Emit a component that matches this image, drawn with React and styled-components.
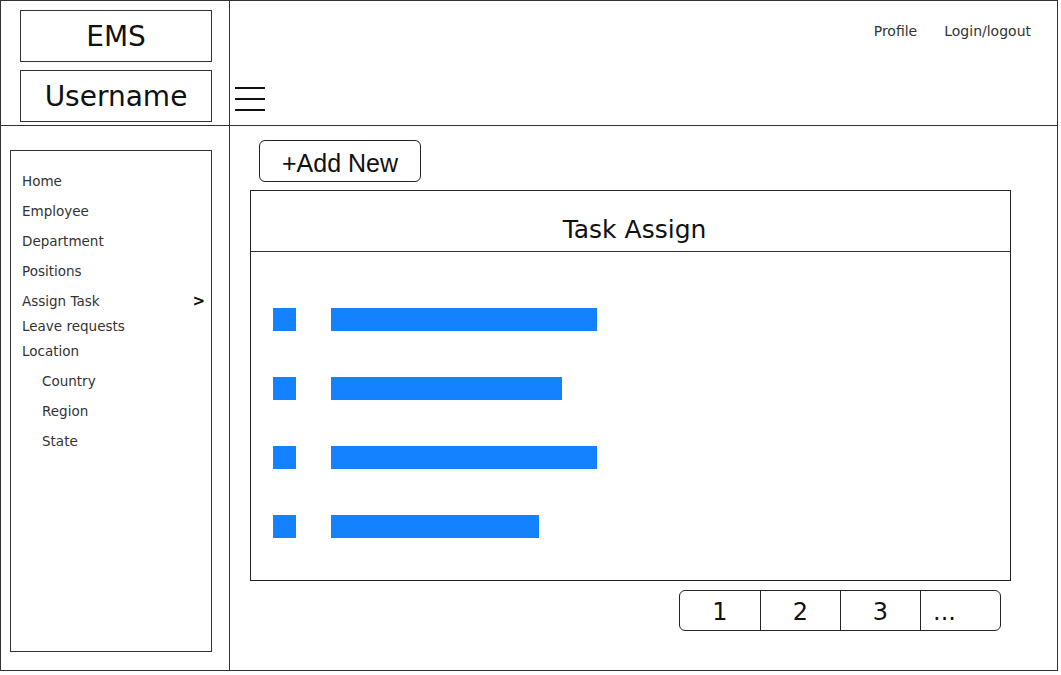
import styled, { createGlobalStyle } from 'styled-components';

const menu = [
  { label: "Home", h: 30 },
  { label: "Employee", h: 30 },
  { label: "Department", h: 30 },
  { label: "Positions", h: 30 },
  { label: "Assign Task", h: 30, arrow: true },
  { label: "Leave requests", h: 20 },
  { label: "Location", h: 30 },
  { label: "Country", h: 30, sub: true },
  { label: "Region", h: 30, sub: true },
  { label: "State", h: 30, sub: true }
];

const tasks = [266, 231, 266, 208];
const pages = ["1", "2", "3", "..."];

const GlobalStyle = createGlobalStyle`
  * { box-sizing: border-box; }
  body {
    margin: 0;
    background: white;
    font-family: "DejaVu Sans", sans-serif;
    color: #222;
  }
`;

const App = () => {
  return (
    <>
      <GlobalStyle />
      <Frame>
        <Brand>
          <BrandBox>EMS</BrandBox>
          <BrandBox>Username</BrandBox>
        </Brand>
        <Topbar>
          <TopLinks>
            <TopLink>Profile</TopLink>
            <TopLink>Login/logout</TopLink>
          </TopLinks>
          <Burger>
            <span />
            <span />
            <span />
          </Burger>
        </Topbar>
        <Sidebar>
          <MenuBox>
            {menu.map((item, i) => (
              <MenuItem key={i} $h={item.h} $sub={item.sub}>
                {item.label}
                {item.arrow && <Arrow>&gt;</Arrow>}
              </MenuItem>
            ))}
          </MenuBox>
        </Sidebar>
        <Main>
          <AddButton>+Add New</AddButton>
          <Panel>
            <PanelHeader>Task Assign</PanelHeader>
            <TaskList>
              {tasks.map((w, i) => (
                <TaskRow key={i}>
                  <Square />
                  <Bar style={{ width: w }} />
                </TaskRow>
              ))}
            </TaskList>
          </Panel>
          <Pager>
            {pages.map((p, i) => (
              <PageCell key={i} $dots={p === "..."}>{p}</PageCell>
            ))}
          </Pager>
        </Main>
      </Frame>
    </>
  );
};

const Frame = styled.div`
  width: 1058px;
  height: 671px;
  border: 1px solid #333;
  display: grid;
  grid-template-columns: 229px 1fr;
  grid-template-rows: 125px 1fr;
`;

const Brand = styled.div`
  border-right: 1px solid #333;
  border-bottom: 1px solid #333;
  display: flex;
  flex-direction: column;
  gap: 8px;
  padding: 9px 0 0 19px;
`;

const BrandBox = styled.div`
  width: 192px;
  height: 52px;
  border: 1.5px solid #333;
  display: flex;
  align-items: center;
  justify-content: center;
  font-size: 28px;
  color: #111;
`;

const Topbar = styled.div`
  border-bottom: 1px solid #333;
  display: flex;
  flex-direction: column;
  justify-content: space-between;
  padding: 22px 26px 14px 5px;
`;

const TopLinks = styled.div`
  display: flex;
  justify-content: flex-end;
  gap: 27px;
`;

const TopLink = styled.span`
  font-size: 14px;
  color: #333;
`;

const Burger = styled.div`
  width: 30px;
  display: flex;
  flex-direction: column;
  gap: 9px;
  span {
    display: block;
    height: 2px;
    background: #111;
  }
`;

const Sidebar = styled.div`
  border-right: 1px solid #333;
  padding: 24px 0 18px 9px;
`;

const MenuBox = styled.div`
  width: 202px;
  height: 502px;
  border: 1.5px solid #333;
  padding-top: 15px;
`;

const MenuItem = styled.div`
  position: relative;
  height: ${p => p.$h}px;
  line-height: ${p => p.$h}px;
  padding-left: ${p => (p.$sub ? 31 : 11)}px;
  font-size: 13.5px;
  color: #333;
`;

const Arrow = styled.span`
  position: absolute;
  right: 6px;
  top: 0;
  font-weight: bold;
  font-size: 15px;
  color: #111;
`;

const Main = styled.div`
  display: flex;
  flex-direction: column;
  padding: 14px 0 0 20px;
`;

const AddButton = styled.div`
  margin-left: 9px;
  width: 162px;
  height: 42px;
  border: 1px solid #222;
  border-radius: 6px;
  display: flex;
  align-items: center;
  justify-content: center;
  font-family: "Liberation Sans", Arial, sans-serif;
  font-size: 25px;
  color: #111;
  padding-top: 5px;
`;

const Panel = styled.div`
  margin-top: 8px;
  width: 761px;
  height: 391px;
  border: 1px solid #222;
`;

const PanelHeader = styled.div`
  height: 61px;
  border-bottom: 1px solid #333;
  display: flex;
  align-items: flex-end;
  justify-content: center;
  padding: 0 0 7px 8px;
  font-size: 25px;
  color: #111;
`;

const TaskList = styled.div`
  display: flex;
  flex-direction: column;
  gap: 46px;
  padding: 56px 0 0 22px;
`;

const TaskRow = styled.div`
  display: flex;
  gap: 35px;
`;

const Square = styled.div`
  width: 23px;
  height: 23px;
  background: #1482fe;
`;

const Bar = styled.div`
  height: 23px;
  background: #1482fe;
`;

const Pager = styled.div`
  align-self: flex-end;
  margin: 9px 56px 0 0;
  display: flex;
  height: 41px;
  border: 1px solid #222;
  border-radius: 6px;
`;

const PageCell = styled.div`
  width: 80px;
  display: flex;
  align-items: center;
  justify-content: ${p => (p.$dots ? "flex-start" : "center")};
  padding: ${p => (p.$dots ? "2px 0 0 12px" : "2px 0 0 0")};
  font-size: 24px;
  color: #111;
  & + & {
    border-left: 1px solid #222;
  }
`;

export default App;
